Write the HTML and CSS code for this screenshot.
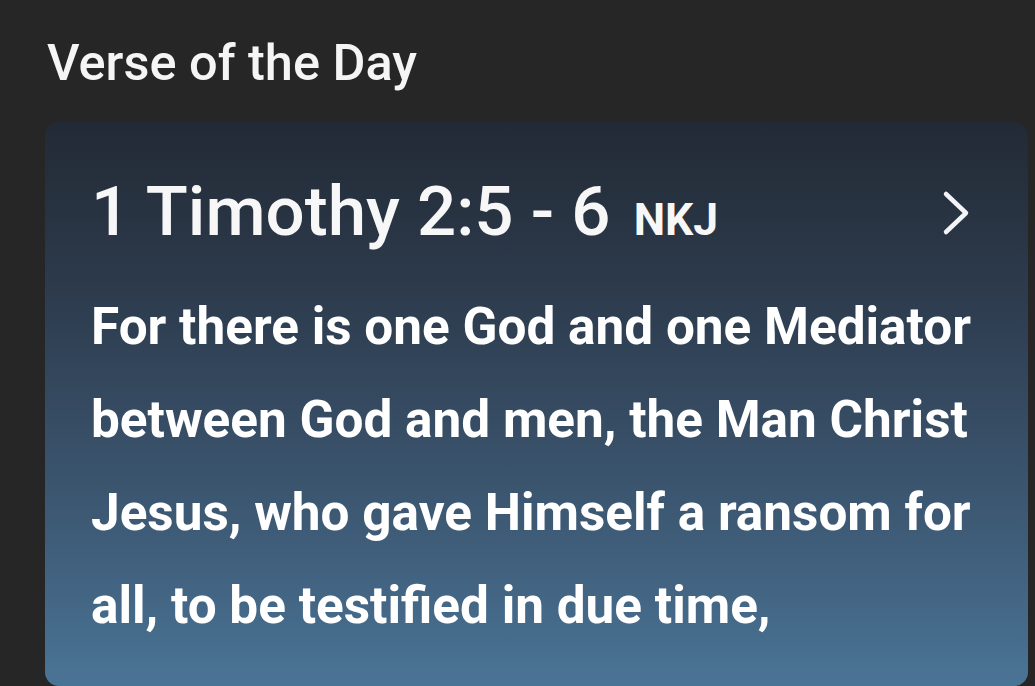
FILE: index.html
```html
<!DOCTYPE html>
<html>
<head>
<meta charset="utf-8">
<link rel="stylesheet" href="styles.css">
</head>
<body>
<div class="page">
  <h1 class="section-title">Verse of the Day</h1>
  <div class="card">
    <div class="card-head">
      <div class="ref">1 Timothy 2:5 - 6 <span class="version">NKJ</span></div>
      <svg class="chevron" width="30" height="46" viewBox="0 0 30 46" aria-hidden="true">
        <path d="M4 4 L24 23 L4 42" fill="none" stroke="#f2f4f7" stroke-width="4.5" stroke-linecap="round" stroke-linejoin="round"/>
      </svg>
    </div>
    <p class="verse">For there is one God and one Mediator between God and men, the Man Christ Jesus, who gave Himself a ransom for all, to be testified in due time,</p>
  </div>
</div>
</body>
</html>
```

FILE: styles.css
```css
html, body {
  margin: 0;
  padding: 0;
  background: #262626;
  height: 100%;
  overflow: hidden;
}
.page {
  font-family: Roboto, "Liberation Sans", sans-serif;
  color: #f5f5f5;
  padding: 29px 7px 0 45px;
}
.section-title {
  margin: 0 0 0 2px;
  font-size: 50.5px;
  font-weight: 500;
  line-height: 68px;
}
.card {
  margin-top: 25px;
  height: 564px;
  border-radius: 14px;
  background: linear-gradient(180deg, #222a35 0%, #2d3b4d 30%, #3d5974 70%, #4a7496 100%);
  padding: 0 0 0 46px;
  box-sizing: border-box;
}
.card-head {
  display: flex;
  align-items: center;
  justify-content: space-between;
  padding-top: 50px;
  padding-right: 56px;
}
.ref {
  font-size: 69px;
  font-weight: 500;
  line-height: 80px;
  color: #f7f7f7;
}
.version {
  font-size: 44.5px;
  font-weight: 700;
  margin-left: 6px;
}
.chevron {
  display: block;
  margin-top: -6px;
}
.verse {
  margin: 20px 0 0 0;
  font-size: 51.3px;
  font-weight: 700;
  line-height: 93px;
  color: #ffffff;
  padding-right: 20px;
}
```
